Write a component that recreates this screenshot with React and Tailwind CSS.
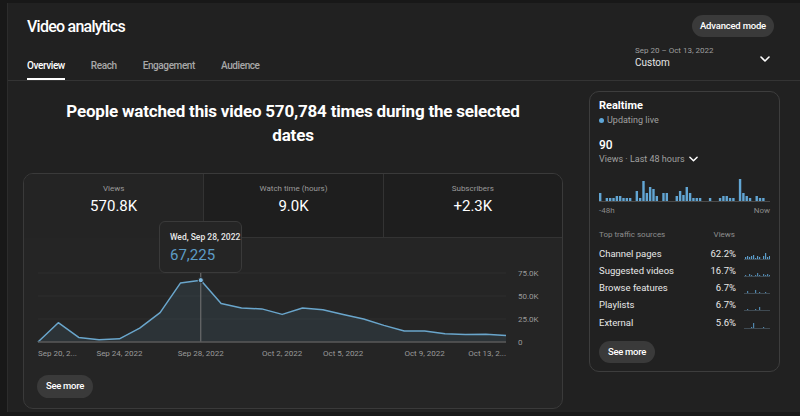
import React from 'react';

// daily views (K) Sep 20 → Oct 13
const views = [0, 21, 5, 2.5, 3.5, 15, 32, 64, 67.2, 42, 37, 36, 30, 37, 35, 30, 25, 18, 12, 12, 9, 8, 8.5, 7];
const px = (i) => 14 + i * (468 / 23);
const py = (v) => 104 - v * 0.92;

const realtime = [8,0,3,3,3,5,5,3,3,3,0,10,3,20,8,14,12,5,0,8,8,0,0,5,10,6,14,8,3,3,3,0,0,3,0,0,3,5,5,3,3,0,22,8,5,3,0,5,3,3,0,0];

const sources = [
  { name: 'Channel pages', pct: '62.2%', bars: [2,3,2,3,4,1,3,2,0,3,6,2,3], bright: true },
  { name: 'Suggested videos', pct: '16.7%', bars: [1,0,2,1,0,1,3,1,0,2,1,2,1] },
  { name: 'Browse features', pct: '6.7%', bars: [0,2,0,0,0,3,0,1,0,0,1,0,0] },
  { name: 'Playlists', pct: '6.7%', bars: [0,1,0,0,0,1,0,3,0,0,0,0,0] },
  { name: 'External', pct: '5.6%', bars: [0,0,0,1,5,0,0,0,0,1,0,0,0] },
];

function MainChart() {
  const pts = views.map((v, i) => `${px(i).toFixed(1)},${py(v).toFixed(1)}`);
  const area = `M${px(0)},104 L${pts.join(' L')} L${px(23)},104 Z`;
  const xLabels = [
    { i: 0, t: 'Sep 20, 2...', a: 'start' },
    { i: 4, t: 'Sep 24, 2022', a: 'middle' },
    { i: 8, t: 'Sep 28, 2022', a: 'middle' },
    { i: 12, t: 'Oct 2, 2022', a: 'middle' },
    { i: 15, t: 'Oct 5, 2022', a: 'middle' },
    { i: 19, t: 'Oct 9, 2022', a: 'middle' },
    { i: 23, t: 'Oct 13, 2...', a: 'end' },
  ];
  return (
    <svg width="538" height="125" className="block">
      {[35, 58, 81].map((y) => (
        <line key={y} x1="14" x2="482" y1={y} y2={y} stroke="#2f2f2f" strokeWidth="1" />
      ))}
      <path d={area} fill="#5c8fae" fillOpacity="0.13" />
      <line x1={px(8)} x2={px(8)} y1="35" y2="104" stroke="#777" strokeWidth="1" />
      <polyline points={pts.join(' ')} fill="none" stroke="#6aa6cc" strokeWidth="1.5" strokeLinejoin="round" />
      <line x1="14" x2="482" y1="104" y2="104" stroke="#5a5a5a" strokeWidth="1.5" />
      <circle cx={px(8)} cy={py(67.2)} r="2.6" fill="#7cb7df" stroke="#252525" strokeWidth="1" />
      {[['75.0K', 35], ['50.0K', 58], ['25.0K', 81], ['0', 104]].map(([t, y]) => (
        <text key={t} x="494" y={y + 3} fontSize="8" fill="#9a9a9a">{t}</text>
      ))}
      {xLabels.map((l) => (
        <text key={l.t} x={px(l.i)} y="118" fontSize="8" fill="#9a9a9a" textAnchor={l.a}>{l.t}</text>
      ))}
    </svg>
  );
}

function RealtimeBars() {
  return (
    <svg width="171" height="25" className="block">
      {realtime.map((h, i) =>
        h > 0 ? <rect key={i} x={i * 3.33} y={24 - h} width="2.4" height={h} fill="#62a6d4" /> : null
      )}
      <line x1="0" x2="171" y1="24.5" y2="24.5" stroke="#4a4a4a" strokeWidth="1" />
    </svg>
  );
}

function Spark({ bars, bright }) {
  return (
    <svg width="26" height="10" className="block">
      {bars.map((h, i) =>
        h > 0 ? <rect key={i} x={1 + i * 2} y={9 - h} width="1.2" height={h} fill={bright ? '#5b9dca' : '#4f86ad'} /> : null
      )}
      <line x1="0" x2="26" y1="9.5" y2="9.5" stroke="#3f4a52" strokeWidth="1" />
    </svg>
  );
}

export default function App() {
  return (
    <div className="w-[800px] h-[416px] bg-[#181818] pt-[3px] pl-[7px] overflow-hidden font-['Roboto',sans-serif] text-white">
      <div className="h-[409px] bg-[#212121] border-l border-[#2c2c2c] flex flex-col">
        {/* header */}
        <div className="h-[78px] border-b border-[#343434] pl-[19px] pr-[26px] flex flex-col">
          <div className="mt-[12px] h-[22px] flex justify-between items-start">
            <h1 className="mt-[2px] text-[16px] leading-[20px] font-medium tracking-[-0.75px]">Video analytics</h1>
            <button className="h-[22px] px-[8px] rounded-full bg-[#3a3a3a] text-[9.5px] font-medium tracking-[-0.2px]">Advanced mode</button>
          </div>
          <div className="flex-1 flex justify-between items-end">
            <div className="flex gap-[26px] text-[10px] font-medium leading-[14px] tracking-[-0.4px]">
              <div className="pb-[5px] border-b-2 border-white text-white">Overview</div>
              <div className="pb-[5px] border-b-2 border-transparent text-[#a8a8a8]">Reach</div>
              <div className="pb-[5px] border-b-2 border-transparent text-[#a8a8a8]">Engagement</div>
              <div className="pb-[5px] border-b-2 border-transparent text-[#a8a8a8]">Audience</div>
            </div>
            <div className="self-start mt-[9px] mr-[4px] w-[135px] flex justify-between items-center">
              <div>
                <div className="text-[8px] leading-[10px] text-[#9e9e9e]">Sep 20 – Oct 13, 2022</div>
                <div className="text-[10px] leading-[13px] text-[#e6e6e6]">Custom</div>
              </div>
              <svg width="10" height="6" viewBox="0 0 10 6" className="mb-[-2px]">
                <path d="M1 1l4 4 4-4" fill="none" stroke="#fff" strokeWidth="1.6" strokeLinecap="round" strokeLinejoin="round" />
              </svg>
            </div>
          </div>
        </div>

        {/* body */}
        <div className="flex">
          {/* left column */}
          <div className="ml-[15px] w-[540px]">
            <h2 className="mt-[18px] mx-auto w-[480px] text-center text-[17px] leading-[24px] font-bold tracking-[-0.2px]">
              People watched this video 570,784 times during the selected dates
            </h2>
            <div className="mt-[26px] h-[236px] rounded-[10px] border border-[#3a3a3a] overflow-hidden bg-[#252525] flex flex-col">
              <div className="h-[64px] grid grid-cols-3 text-center">
                <div className="bg-[#242424] pt-[10px]">
                  <div className="text-[8px] leading-[10px] text-[#9a9a9a]">Views</div>
                  <div className="mt-[3px] text-[15px] leading-[18px]">570.8K</div>
                </div>
                <div className="bg-[#1e1e1e] border-l border-b border-[#333] pt-[10px]">
                  <div className="text-[8px] leading-[10px] text-[#9a9a9a]">Watch time (hours)</div>
                  <div className="mt-[3px] text-[15px] leading-[18px]">9.0K</div>
                </div>
                <div className="bg-[#1e1e1e] border-l border-b border-[#333] pt-[10px]">
                  <div className="text-[8px] leading-[10px] text-[#9a9a9a]">Subscribers</div>
                  <div className="mt-[3px] text-[15px] leading-[18px]">+2.3K</div>
                </div>
              </div>
              <div className="relative">
                <MainChart />
                <div className="absolute left-[135px] top-[-17px] w-[83px] h-[52px] rounded-[6px] border border-[#3a3a3a] bg-[#252525] pl-[10px] pt-[10px]">
                  <div className="text-[8.5px] leading-[11px] font-medium text-[#e8e8e8]">Wed, Sep 28, 2022</div>
                  <div className="mt-[3px] text-[15px] leading-[18px] text-[#5d9cc6]">67,225</div>
                </div>
              </div>
              <div className="pl-[13px] mt-[9px]">
                <button className="h-[23px] px-[9px] rounded-full bg-[#3a3a3a] text-[9.5px] font-medium tracking-[-0.3px]">See more</button>
              </div>
            </div>
          </div>

          {/* right column */}
          <div className="ml-[26px] mt-[10px] w-[191px] h-[281px] rounded-[10px] border border-[#3d3d3d] pl-[9px] pr-[9px] pt-[7px]">
            <div className="text-[11px] leading-[14px] font-bold">Realtime</div>
            <div className="mt-[1px] flex items-center gap-[3px] text-[9px] leading-[12px] text-[#a0a0a0]">
              <span className="w-[5px] h-[5px] rounded-full bg-[#5ea6d8]"></span>
              Updating live
            </div>
            <div className="mt-[12px] text-[12px] leading-[14px] font-medium">90</div>
            <div className="mt-[1px] flex items-center gap-[4px] text-[9px] leading-[12px] text-[#a0a0a0]">
              Views · Last 48 hours
              <svg width="9" height="6" viewBox="0 0 10 6">
                <path d="M1 1l4 4 4-4" fill="none" stroke="#fff" strokeWidth="1.6" strokeLinecap="round" strokeLinejoin="round" />
              </svg>
            </div>
            <div className="mt-[12px]">
              <RealtimeBars />
            </div>
            <div className="mt-[4px] flex justify-between text-[8px] leading-[10px] text-[#8a8a8a]">
              <span>-48h</span>
              <span>Now</span>
            </div>
            <div className="mt-[14px] flex text-[8px] leading-[10px] text-[#8e8e8e]">
              <span className="flex-1">Top traffic sources</span>
              <span className="mr-[35px]">Views</span>
            </div>
            <div className="mt-[5px]">
              {sources.map((s) => (
                <div key={s.name} className="h-[17.25px] flex items-center text-[9.5px] text-[#e8e8e8]">
                  <span className="flex-1">{s.name}</span>
                  <span className="text-right">{s.pct}</span>
                  <div className="ml-[8px] mt-[2px]">
                    <Spark bars={s.bars} bright={s.bright} />
                  </div>
                </div>
              ))}
            </div>
            <button className="mt-[10px] h-[22px] px-[9px] rounded-full bg-[#3a3a3a] text-[9.5px] font-medium tracking-[-0.3px]">See more</button>
          </div>
        </div>
      </div>
    </div>
  );
}
